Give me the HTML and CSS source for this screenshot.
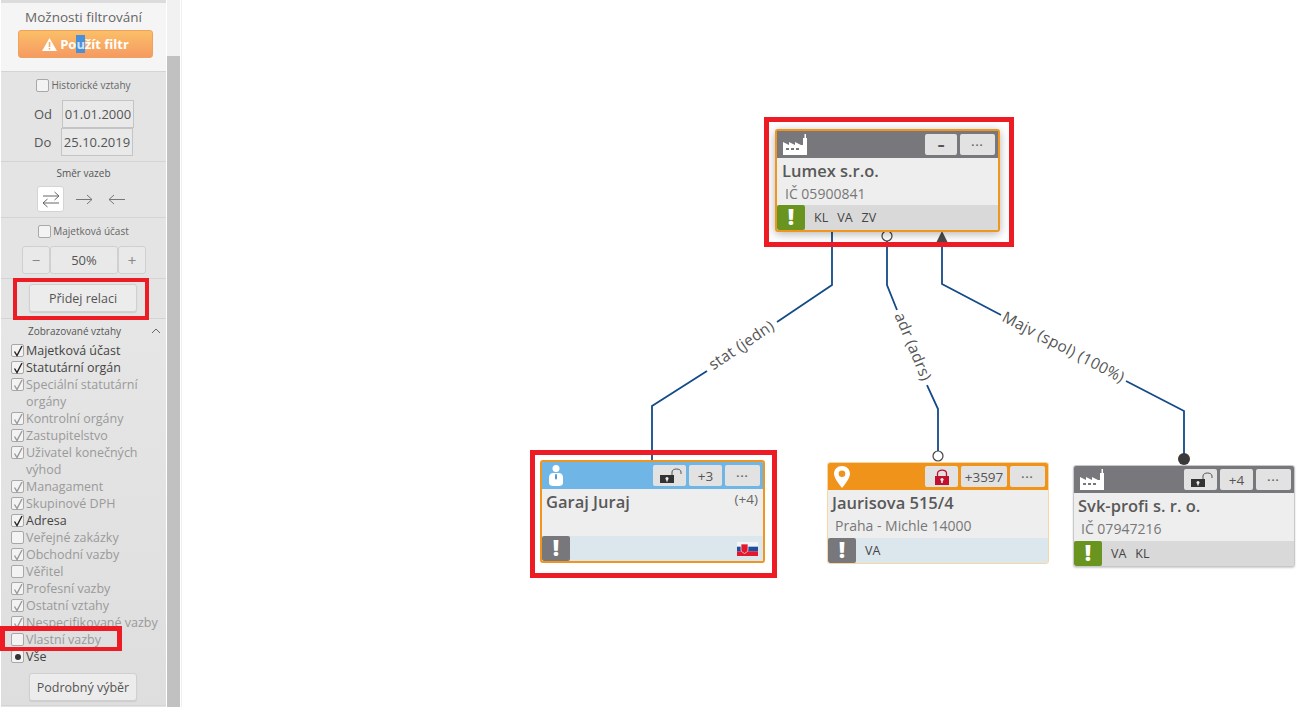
FILE: index.html
```html
<!DOCTYPE html>
<html>
<head>
  <meta charset="UTF-8">
  <title>Vztahy</title>
  <link rel="stylesheet" href="styles.css">
</head>
<body>
  <svg class="defs" width="0" height="0">
    <symbol id="tick" viewBox="0 0 12 12">
      <path d="M2.500 6.500 L5 10.500 L10 1" fill="none" stroke="currentColor" stroke-width="1.400"/>
    </symbol>
    <symbol id="factory" viewBox="0 0 24 21">
      <path d="M0 8 L6 11 L6 8 L12 11 L12 8 L18 11 L20 11 L20 4 L21.500 4 L21.500 0 L23 0 L23 4 L24 4 L24 21 L0 21 Z M3 14 V16 H6 V14 Z M8 14 V16 H11 V14 Z M13 14 V16 H16 V14 Z" fill="#fff" fill-rule="evenodd"/>
    </symbol>
    <symbol id="lock-open" viewBox="0 0 26 16">
      <path d="M3 7 H17 V15 H3 Z" fill="#333"/>
      <circle cx="10" cy="10.500" r="1.500" fill="#eee"/>
      <path d="M9.300 11 H10.700 V13.500 H9.300 Z" fill="#eee"/>
      <path d="M15 7 V4 C15 0 24 0 24 4 V6" fill="none" stroke="#555" stroke-width="1"/>
    </symbol>
    <symbol id="lock-closed" viewBox="0 0 16 16">
      <path d="M1 7 H15 V16 H1 Z" fill="#c0122c"/>
      <path d="M3.500 7 V4.500 C3.500 0 12.500 0 12.500 4.500 V7" fill="none" stroke="#c0122c" stroke-width="1.300"/>
      <circle cx="8" cy="10.500" r="1.600" fill="#eee"/>
      <path d="M7.200 11 H8.800 V14 H7.200 Z" fill="#eee"/>
    </symbol>
  </svg>

  <aside class="sidebar">
    <div class="panel">
      <section class="sec sec-top">
        <div class="top-title">Možnosti filtrování</div>
        <button class="apply-btn">
          <svg class="warn" width="15" height="13" viewBox="0 0 15 13"><path d="M7.500 0 L15 13 H0 Z M6.700 4 V9 H8.300 V4 Z M6.700 10 V11.500 H8.300 V10 Z" fill="#fff" fill-rule="evenodd"/></svg>
          <span>Po<span class="sel">u</span>žít filtr</span>
        </button>
      </section>

      <section class="sec sec-dates">
        <label class="small-check"><span class="box"></span>Historické vztahy</label>
        <div class="date-row"><span class="date-label">Od</span><span class="date-input">01.01.2000</span></div>
        <div class="date-row date-row-do"><span class="date-label">Do</span><span class="date-input">25.10.2019</span></div>
      </section>

      <section class="sec sec-dir">
        <div class="sec-caption">Směr vazeb</div>
        <div class="dir-row">
          <span class="dir-btn active">
            <svg width="18" height="17" viewBox="0 0 18 17"><path d="M1 5 H17 M12.500 1 L17 5 L12.500 9 M17 12 H1 M5.500 8 L1 12 L5.500 16" fill="none" stroke="#666" stroke-width="1"/></svg>
          </span>
          <span class="dir-btn">
            <svg width="18" height="11" viewBox="0 0 18 11"><path d="M1 5.500 H17 M12 1 L17 5.500 L12 10" fill="none" stroke="#777" stroke-width="1"/></svg>
          </span>
          <span class="dir-btn">
            <svg width="18" height="11" viewBox="0 0 18 11"><path d="M17 5.500 H1 M6 1 L1 5.500 L6 10" fill="none" stroke="#777" stroke-width="1"/></svg>
          </span>
        </div>
      </section>

      <section class="sec sec-share">
        <label class="small-check"><span class="box"></span>Majetková účast</label>
        <div class="stepper">
          <span class="step-btn">&minus;</span>
          <span class="step-value">50%</span>
          <span class="step-btn">+</span>
        </div>
      </section>

      <section class="sec sec-add">
        <button class="side-btn">Přidej relaci</button>
      </section>

      <section class="sec sec-list">
        <div class="list-head">
          <span class="sec-caption">Zobrazované vztahy</span>
          <svg class="chevron" width="10" height="6" viewBox="0 0 10 6"><path d="M1 5 L5 1 L9 5" fill="none" stroke="#666" stroke-width="1"/></svg>
        </div>
        <ul class="rel-list">
          <li class="on"><span class="box"><svg><use href="#tick"/></svg></span>Majetková účast</li>
          <li class="on"><span class="box"><svg><use href="#tick"/></svg></span>Statutární orgán</li>
          <li><span class="box"><svg><use href="#tick"/></svg></span>Speciální statutární orgány</li>
          <li><span class="box"><svg><use href="#tick"/></svg></span>Kontrolní orgány</li>
          <li><span class="box"><svg><use href="#tick"/></svg></span>Zastupitelstvo</li>
          <li><span class="box"><svg><use href="#tick"/></svg></span>Uživatel konečných výhod</li>
          <li><span class="box"><svg><use href="#tick"/></svg></span>Managament</li>
          <li><span class="box"><svg><use href="#tick"/></svg></span>Skupinové DPH</li>
          <li class="on"><span class="box"><svg><use href="#tick"/></svg></span>Adresa</li>
          <li><span class="box"></span>Veřejné zakázky</li>
          <li><span class="box"><svg><use href="#tick"/></svg></span>Obchodní vazby</li>
          <li><span class="box"></span>Věřitel</li>
          <li><span class="box"><svg><use href="#tick"/></svg></span>Profesní vazby</li>
          <li><span class="box"><svg><use href="#tick"/></svg></span>Ostatní vztahy</li>
          <li><span class="box"><svg><use href="#tick"/></svg></span><span class="nowrap">Nespecifikované vazby</span></li>
          <li><span class="box"></span>Vlastní vazby</li>
          <li class="on"><span class="box"><span class="dot"></span></span>Vše</li>
        </ul>
        <button class="side-btn">Podrobný výběr</button>
      </section>
    </div>
    <div class="scroll"><div class="scroll-thumb"></div></div>
  </aside>

  <main class="canvas">
    <svg class="edges" width="1311" height="707" viewBox="0 0 1311 707">
      <path class="edge" d="M832 232 V285 L777 322 M707 371 L652 406 V460"/>
      <path class="edge" d="M887 241 V285 L897 310 M927 385 L938 409 V451"/>
      <path class="edge" d="M942 243 V284 L1001 315 M1126 381 L1184 411 V454"/>
      <circle class="port" cx="887" cy="236" r="5"/>
      <path d="M936 243 L942 231 L948 243 Z" fill="#4a4a4a"/>
      <circle class="port" cx="938" cy="456" r="5"/>
      <circle cx="1184" cy="459" r="6" fill="#3a3a3a"/>
      <text class="edge-label" transform="translate(742 346) rotate(-34)">stat (jedn)</text>
      <text class="edge-label" transform="translate(912 347) rotate(67.500)">adr (adrs)</text>
      <text class="edge-label" transform="translate(1063 348) rotate(27.500)">Majv (spol) (100%)</text>
    </svg>

    <div class="node node-lumex">
      <div class="node-head head-gray">
        <svg class="node-icon" width="24" height="21"><use href="#factory"/></svg>
        <span class="head-btn btn-min">&#8211;</span>
        <span class="head-btn btn-more">&middot;&middot;&middot;</span>
      </div>
      <div class="node-body">
        <div class="node-name">Lumex s.r.o.</div>
        <div class="node-sub">IČ 05900841</div>
      </div>
      <div class="node-foot foot-gray">
        <span class="flag flag-green">!</span>
        <span class="tags"><span>KL</span><span>VA</span><span>ZV</span></span>
      </div>
    </div>

    <div class="node node-garaj">
      <div class="node-head head-blue">
        <svg class="node-icon" width="16" height="21" viewBox="0 0 16 21">
          <circle cx="8" cy="3.500" r="3.500" fill="#fff"/>
          <path d="M1 13 C1 9 3 8 6 8 H10 C13 8 15 9 15 13 V18 C15 20 13 21 11 21 H5 C3 21 1 20 1 18 Z" fill="#fff"/>
          <path d="M7.400 9 H8.600 L9 13 L8 15 L7 13 Z" fill="#3d86c6"/>
        </svg>
        <span class="head-btn btn-lock"><svg width="26" height="16"><use href="#lock-open"/></svg></span>
        <span class="head-btn btn-count">+3</span>
        <span class="head-btn btn-more">&middot;&middot;&middot;</span>
      </div>
      <div class="node-body">
        <div class="name-row"><span class="node-name">Garaj Juraj</span><span class="node-extra">(+4)</span></div>
      </div>
      <div class="node-foot foot-blue">
        <span class="flag flag-gray">!</span>
        <svg class="country" width="21" height="14" viewBox="0 0 21 14">
          <rect width="21" height="4.700" fill="#f4f4f4"/>
          <rect y="4.700" width="21" height="4.600" fill="#1c4fa1"/>
          <rect y="9.300" width="21" height="4.700" fill="#e3182d"/>
          <path d="M4 2 H11 V8 C11 10 8 11 7.500 11.500 C7 11 4 10 4 8 Z" fill="#e3182d" stroke="#f4f4f4" stroke-width=".7"/>
        </svg>
      </div>
    </div>

    <div class="node node-addr">
      <div class="node-head head-orange">
        <svg class="node-icon" width="16" height="22" viewBox="0 0 16 22">
          <path d="M8 0 C3.500 0 0 3.300 0 7.800 C0 13 8 22 8 22 C8 22 16 13 16 7.800 C16 3.300 12.500 0 8 0 Z M8 4.500 A3.300 3.300 0 1 1 8 11.100 A3.300 3.300 0 1 1 8 4.500 Z" fill="#fff" fill-rule="evenodd"/>
        </svg>
        <span class="head-btn btn-lock btn-lock-red"><svg width="16" height="16"><use href="#lock-closed"/></svg></span>
        <span class="head-btn btn-count btn-wide">+3597</span>
        <span class="head-btn btn-more">&middot;&middot;&middot;</span>
      </div>
      <div class="node-body">
        <div class="node-name">Jaurisova 515/4</div>
        <div class="node-sub">Praha - Michle 14000</div>
      </div>
      <div class="node-foot foot-blue">
        <span class="flag flag-gray">!</span>
        <span class="tags"><span>VA</span></span>
      </div>
    </div>

    <div class="node node-svk">
      <div class="node-head head-gray">
        <svg class="node-icon" width="24" height="21"><use href="#factory"/></svg>
        <span class="head-btn btn-lock"><svg width="26" height="16"><use href="#lock-open"/></svg></span>
        <span class="head-btn btn-count">+4</span>
        <span class="head-btn btn-more">&middot;&middot;&middot;</span>
      </div>
      <div class="node-body">
        <div class="node-name">Svk-profi s. r. o.</div>
        <div class="node-sub">IČ 07947216</div>
      </div>
      <div class="node-foot foot-gray">
        <span class="flag flag-green">!</span>
        <span class="tags"><span>VA</span><span>KL</span></span>
      </div>
    </div>
  </main>

  <div class="mark mark-lumex"></div>
  <div class="mark mark-garaj"></div>
  <div class="mark mark-add"></div>
  <div class="mark mark-own"></div>
</body>
</html>
```

FILE: styles.css
```css
* {
  box-sizing: border-box;
}
html, body {
  height: 100%;
}
body {
  margin: 0;
  background: #fff;
  font-family: "Open Sans", "Noto Sans", sans-serif;
  color: #555;
  overflow: hidden;
}
.defs {
  position: absolute;
}
button {
  font-family: inherit;
}

/* sidebar */
.sidebar {
  display: flex;
  width: 182px;
  height: 707px;
  overflow: hidden;
  border-right: 1px solid #f0f0f0;
}
.panel {
  width: 165px;
  margin: 0 1px;
  border-top: 3px solid #dcdcdc;
  background: #e4e4e4;
  flex-shrink: 0;
}
.scroll {
  width: 13px;
  background: #f1f1f1;
  padding-top: 56px;
  height: 100%;
}
.scroll-thumb {
  height: 100%;
  background: #c1c1c1;
}
.sec {
  border-bottom: 1px solid #d4d4d4;
  text-align: center;
}
.sec-top {
  height: 69px;
  background: #f5f5f5;
  padding-top: 5px;
}
.top-title {
  font-size: 13.500px;
  line-height: 18px;
  color: #666;
}
.apply-btn {
  display: flex;
  align-items: center;
  justify-content: center;
  gap: 3px;
  width: 135px;
  height: 28px;
  margin: 4px 0 0 17px;
  padding: 0;
  border: 1px solid #eda35f;
  border-radius: 3px;
  background: linear-gradient(#fbbf67, #f69a62);
  color: #fff;
  font-size: 13px;
  font-weight: 700;
}
.sel {
  background: #4a90d9;
  color: #cfe3f7;
}
.small-check {
  display: flex;
  align-items: center;
  justify-content: center;
  gap: 2px;
  font-size: 10px;
  line-height: 14px;
  color: #666;
}
.box {
  display: inline-flex;
  align-items: center;
  justify-content: center;
  width: 13px;
  height: 13px;
  flex-shrink: 0;
  background: #f3f3f3;
  border: 1px solid #a8a8a8;
  border-radius: 2px;
}
.sec-dates {
  height: 90px;
  padding-top: 6px;
}
.date-row {
  display: flex;
  align-items: center;
  height: 28px;
  padding-left: 33px;
}
.sec-dates .small-check {
  margin-bottom: 8px;
}
.date-label {
  width: 28px;
  text-align: left;
  font-size: 13px;
}
.date-input {
  width: 72px;
  height: 28px;
  line-height: 26px;
  border: 1px solid #c4c4c4;
  background: #e9e9e9;
  font-size: 13px;
  color: #555;
}
.date-row-do .date-label {
  width: 27px;
}
.sec-caption {
  font-size: 10px;
  line-height: 14px;
  color: #555;
}
.sec-dir {
  height: 56px;
  padding-top: 4px;
}
.dir-row {
  display: flex;
  gap: 6px;
  margin: 6px 0 0 36px;
}
.dir-btn {
  display: flex;
  align-items: center;
  justify-content: center;
  width: 27px;
  height: 26px;
  border-radius: 3px;
}
.dir-btn.active {
  background: #fff;
  border: 1px solid #d4d4d4;
}
.sec-share {
  height: 61px;
  padding-top: 6px;
}
.stepper {
  display: flex;
  margin: 8px 0 0 21px;
  height: 28px;
}
.step-btn, .step-value {
  display: block;
  border: 1px solid #d0d0d0;
  border-radius: 3px;
  background: #e9e9e9;
  line-height: 26px;
  font-size: 13px;
}
.step-btn {
  width: 28px;
  font-size: 15px;
  color: #888;
}
.step-value {
  width: 68px;
}
.sec-add {
  height: 40px;
  padding-top: 5px;
}
.side-btn {
  display: block;
  width: 108px;
  height: 28px;
  margin-left: 28px;
  padding: 0;
  border: 1px solid #d0d0d0;
  border-radius: 3px;
  background: #ececec;
  box-shadow: 0 1px 1px #ccc;
  color: #555;
  font-size: 12.500px;
}
.sec-list {
  height: 387px;
  padding-top: 5px;
  background: linear-gradient(#e6e6e6, #dedede);
}
.list-head {
  position: relative;
  display: flex;
  height: 14px;
  padding-left: 27px;
}
.chevron {
  position: absolute;
  right: 5px;
  top: 4px;
}
.rel-list {
  list-style: none;
  margin: 4px 0 0;
  padding: 0 0 0 10px;
  text-align: left;
}
.rel-list li {
  position: relative;
  padding-left: 15px;
  font-size: 12.500px;
  line-height: 17px;
  color: #9a9a9a;
}
.rel-list li.on {
  color: #444;
}
.rel-list .box {
  position: absolute;
  left: 0;
  top: 2px;
  color: #9a9a9a;
}
.rel-list li.on .box {
  color: #222;
}
.rel-list .box svg {
  width: 12px;
  height: 12px;
  display: block;
  flex-shrink: 0;
}
.dot {
  width: 6px;
  height: 6px;
  border-radius: 50%;
  background: #333;
}
.nowrap {
  white-space: nowrap;
}
.sec-list .side-btn {
  margin-top: 8px;
}

/* diagram */
.canvas {
  position: absolute;
  left: 0;
  top: 0;
  width: 1311px;
  height: 707px;
  pointer-events: none;
}
.edges {
  position: absolute;
  left: 0;
  top: 0;
}
.edge {
  fill: none;
  stroke: #134a88;
  stroke-width: 1.800;
}
.port {
  fill: #fff;
  stroke: #444;
  stroke-width: 1.200;
}
.edge-label {
  font-size: 15.500px;
  letter-spacing: 0.300px;
  fill: #555;
  text-anchor: middle;
  dominant-baseline: middle;
}
.node {
  position: absolute;
  display: flex;
  flex-direction: column;
  border-radius: 3px;
  overflow: hidden;
  background: #eee;
}
.node-lumex {
  left: 775px;
  top: 129px;
  width: 225px;
  height: 103px;
  border: 2px solid #f0961e;
  overflow: visible;
  box-shadow: 0 2px 10px rgba(0,0,0,.3);
}
.node-garaj {
  left: 540px;
  top: 460px;
  width: 225px;
  height: 103px;
  border: 2px solid #f0961e;
}
.node-addr {
  left: 827px;
  top: 462px;
  width: 222px;
  height: 102px;
  border: 1px solid #f8d6a0;
}
.node-svk {
  left: 1073px;
  top: 465px;
  width: 222px;
  height: 102px;
  border: 1px solid #c8c8c8;
  box-shadow: 0 1px 2px rgba(0,0,0,.2);
}
.node-head {
  display: flex;
  align-items: center;
  gap: 3px;
  height: 27px;
  padding: 0 3px 0 6px;
  flex-shrink: 0;
}
.head-gray {
  background: #78777c;
}
.head-blue {
  background: #6fb6e6;
}
.head-orange {
  background: #f0931a;
}
.node-icon {
  margin-right: auto;
}
.head-btn {
  display: flex;
  align-items: center;
  justify-content: center;
  height: 21px;
  width: 33px;
  border-radius: 2px;
  background: #e2e2e2;
  color: #555;
  font-size: 13.500px;
}
.btn-more {
  width: 35px;
  font-weight: 700;
  font-size: 11px;
  letter-spacing: 1px;
  color: #666;
}
.btn-wide {
  width: 46px;
}
.btn-min {
  width: 32px;
  font-weight: 800;
}
.node-body {
  flex: 1;
  padding: 3px 5px 0 4px;
  background: #eee;
}
.node-lumex .node-body {
  padding-left: 5px;
}
.node-name {
  font-size: 16.500px;
  line-height: 20px;
  font-weight: 600;
  color: #595959;
}
.node-sub {
  margin: 4px 0 0 3px;
  font-size: 14px;
  line-height: 18px;
  color: #777;
}
.name-row {
  display: flex;
  justify-content: space-between;
}
.node-extra {
  font-size: 13.500px;
  line-height: 14px;
  color: #666;
}
.node-foot {
  display: flex;
  align-items: center;
  height: 25px;
  flex-shrink: 0;
}
.foot-gray {
  background: #d9d9d9;
}
.foot-blue {
  background: #dce6ed;
}
.flag {
  width: 28px;
  height: 25px;
  text-align: center;
  border-radius: 2px;
  color: #fff;
  font-size: 22px;
  line-height: 22px;
  font-weight: 800;
}
.flag-green {
  background: #6a9420;
}
.flag-gray {
  background: #78777c;
}
.tags {
  display: flex;
  gap: 9px;
  margin-left: 9px;
  font-size: 12.500px;
  color: #444;
}
.country {
  margin-left: auto;
  margin-right: 5px;
}

/* red annotation boxes */
.mark {
  position: absolute;
  border: 5px solid #ed1c24;
  pointer-events: none;
}
.mark-lumex {
  left: 764px;
  top: 117px;
  width: 250px;
  height: 130px;
}
.mark-garaj {
  left: 530px;
  top: 450px;
  width: 247px;
  height: 128px;
}
.mark-add {
  left: 13px;
  top: 278px;
  width: 136px;
  height: 42px;
  border-width: 4px;
}
.mark-own {
  left: 0;
  top: 626px;
  width: 122px;
  height: 25px;
  border-width: 5px 5px 4px;
}
```
